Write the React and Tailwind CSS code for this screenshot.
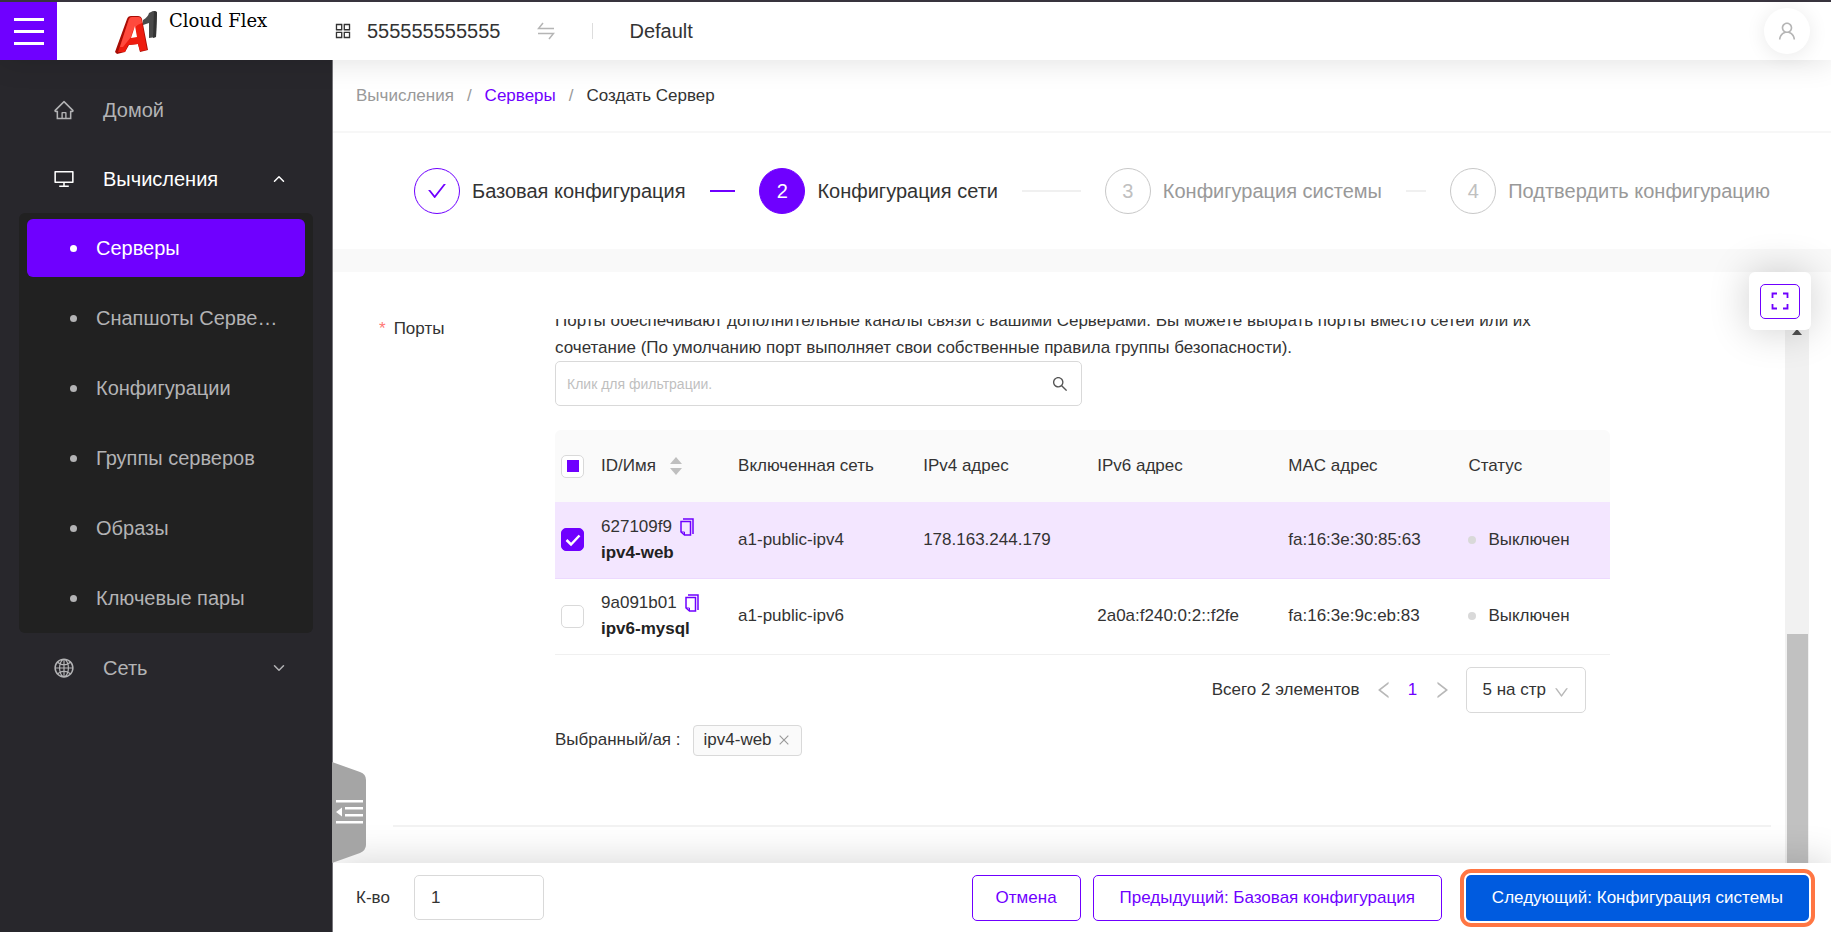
import React, { useEffect, useRef, useState } from 'react';
import {
  AiOutlineAppstore,
  AiOutlineCheck,
  AiOutlineClose,
  AiOutlineDesktop,
  AiOutlineDown,
  AiOutlineGlobal,
  AiOutlineHome,
  AiOutlineLeft,
  AiOutlineRight,
  AiOutlineSearch,
  AiOutlineUser,
} from 'react-icons/ai';
import { FiChevronDown, FiChevronUp } from 'react-icons/fi';

const computeItems = [
  'Серверы',
  'Снапшоты Серве…',
  'Конфигурации',
  'Группы серверов',
  'Образы',
  'Ключевые пары',
];

const steps = [
  { title: 'Базовая конфигурация', state: 'done' },
  { title: 'Конфигурация сети', state: 'active' },
  { title: 'Конфигурация системы', state: 'wait' },
  { title: 'Подтвердить конфигурацию', state: 'wait' },
];

const ports = [
  {
    id: '627109f9',
    name: 'ipv4-web',
    network: 'a1-public-ipv4',
    ipv4: '178.163.244.179',
    ipv6: '',
    mac: 'fa:16:3e:30:85:63',
    status: 'Выключен',
  },
  {
    id: '9a091b01',
    name: 'ipv6-mysql',
    network: 'a1-public-ipv6',
    ipv4: '',
    ipv6: '2a0a:f240:0:2::f2fe',
    mac: 'fa:16:3e:9c:eb:83',
    status: 'Выключен',
  },
];

function Logo() {
  return (
    <svg className="h-[44px] w-[46px]" viewBox="0 0 46 44" aria-hidden="true">
      <path d="M0 41 L12 8 Q13 5 16 5 L23 5 Q26 5 27 8 L33 39 L25 41 L23 33 L14 34 L10 41 L2 43 Z" fill="#a80d05" />
      <path d="M3 41 L14 8 Q15 6 17 6 L23 6 Q26 6 26.500 9 L32 39 L25 40 L23 33 L13 34 L10 41 Z" fill="#ee1c0f" />
      <path d="M14 8 Q15 6 17 6 L23 6 Q26 6 26.500 9 L27 12 Q18 14 16 26 L8 36 L5 36 Z" fill="#ff4a3d" />
      <path d="M16 27 L20 15 L22 26 Z" fill="#fff" />
      <path d="M28 9 Q33 6 34 2 L38 0 Q42 0 42 2 L41 26 L34 27 L34 12 L28 14 Z" fill="#4a4a4a" />
      <path d="M39 0 Q42 0 42 2 L41 26 L38 27 Z" fill="#333" />
    </svg>
  );
}

function SwapIcon() {
  return (
    <svg className="h-[18px] w-[18px]" viewBox="0 0 18 18" fill="none" stroke="#b5b5b5" strokeWidth="1.500" aria-hidden="true">
      <path d="M6 1 L1.500 6.500 H17" />
      <path d="M1 11.500 H16.500 L12 17" />
    </svg>
  );
}

function CopyIcon() {
  return (
    <svg className="h-[18px] w-[14px]" viewBox="0 0 14 18" fill="none" stroke="#6f00ff" strokeWidth="1.500" aria-hidden="true">
      <path d="M3 1 H13 V16" />
      <path d="M1 3.500 H10.500 V17 H4.500 L1 14 Z" />
      <path d="M1 14 H4.500 V17" strokeWidth="1" />
    </svg>
  );
}

function Header() {
  return (
    <header className="relative z-20 flex h-[60px] shrink-0 items-stretch border-t-2 border-[#38343e] bg-white shadow-[0_2px_30px_rgba(0,0,0,0.12)]">
      <button type="button" aria-label="Меню" className="flex w-[57px] flex-col items-center justify-center gap-[9px] bg-[#6f00ff]">
        <span className="h-[3px] w-[30px] bg-white" />
        <span className="h-[3px] w-[30px] bg-white" />
        <span className="h-[3px] w-[30px] bg-white" />
      </button>
      <a href="#home" className="ml-[58px] flex w-[218px] items-start gap-2 pt-[9px] text-black">
        <Logo />
        <span className="font-['DejaVu_Serif',serif] text-[18px] leading-[20px] whitespace-nowrap">Cloud Flex</span>
      </a>
      <div className="flex items-center text-[20px] text-[#333]">
        <AiOutlineAppstore className="size-5" />
        <span className="ml-[14px]">555555555555</span>
        <button type="button" aria-label="Сменить проект" className="ml-[37px]">
          <SwapIcon />
        </button>
        <span className="ml-[37px] h-4 w-px bg-[#ddd]" />
        <span className="ml-9">Default</span>
      </div>
      <button
        type="button"
        aria-label="Профиль"
        className="mr-[21px] ml-auto flex size-[46px] items-center justify-center self-center rounded-full bg-white text-[#b5b5b5] shadow-[0_2px_20px_rgba(0,0,0,0.09)]"
      >
        <AiOutlineUser className="size-[22px]" />
      </button>
    </header>
  );
}

function Sidebar() {
  return (
    <aside className="relative z-10 w-[333px] shrink-0 border-r border-[#77767b] bg-[#28272c] pt-[15px] text-[20px] text-[#b3b3b5]">
      <nav>
        <a href="#home" className="flex h-[69px] items-center pl-[53px]">
          <AiOutlineHome className="size-[22px]" />
          <span className="ml-7">Домой</span>
        </a>
        <button type="button" className="flex h-[69px] w-full items-center pr-[44px] pl-[53px] text-white">
          <AiOutlineDesktop className="size-[22px]" />
          <span className="ml-7">Вычисления</span>
          <FiChevronUp className="ml-auto size-[18px]" />
        </button>
        <ul className="mx-[19px] flex flex-col gap-3 rounded-md bg-[#212121] px-2 py-[6px]">
          {computeItems.map((item, i) => (
            <li key={item}>
              <a
                href="#compute"
                className={`flex h-[58px] items-center rounded-md pl-[43px] ${i === 0 ? 'bg-[#6f00ff] text-white' : ''}`}
              >
                <span className="size-[7px] rounded-full bg-current" />
                <span className="ml-[19px] whitespace-nowrap">{item}</span>
              </a>
            </li>
          ))}
        </ul>
        <button type="button" className="flex h-[69px] w-full items-center pr-[44px] pl-[53px]">
          <AiOutlineGlobal className="size-[22px]" />
          <span className="ml-7">Сеть</span>
          <FiChevronDown className="ml-auto size-[18px]" />
        </button>
      </nav>
      {/* collapse handle hanging over the content */}
      <button type="button" aria-label="Свернуть меню" className="absolute bottom-[69px] left-full">
        <svg className="h-[101px] w-[34px]" viewBox="0 0 34 101" aria-hidden="true">
          <path d="M0 0 L28 10 Q34 12 34 18 V83 Q34 88 28 91 L0 101 Z" fill="#a5a5a5" />
          <g fill="#fff">
            <rect x="4" y="38" width="27" height="2.500" />
            <rect x="13" y="45" width="18" height="2.500" />
            <rect x="13" y="52" width="18" height="2.500" />
            <rect x="4" y="59" width="27" height="2.500" />
            <path d="M4 50 L10 45.500 V54.500 Z" />
          </g>
        </svg>
      </button>
    </aside>
  );
}

function Steps() {
  const circle = {
    done: 'border-[#6f00ff] text-[#6f00ff]',
    active: 'border-[#6f00ff] bg-[#6f00ff] text-white',
    wait: 'border-[#c8c8c8] text-[#c0c0c0]',
  };
  return (
    <ol className="flex h-[116px] shrink-0 items-center pr-[61px] pl-[81px] text-[20px]">
      {steps.map((step, i) => {
        const last = i === steps.length - 1;
        return (
          <li key={step.title} className={`flex items-center ${last ? '' : 'flex-1'}`}>
            <span className={`flex size-[46px] shrink-0 items-center justify-center rounded-full border ${circle[step.state]}`}>
              {step.state === 'done' ? <AiOutlineCheck className="size-[22px]" /> : <span>{i + 1}</span>}
            </span>
            <span className={`ml-3 whitespace-nowrap ${step.state === 'wait' ? 'text-[#999]' : 'text-[#333]'}`}>
              {step.title}
            </span>
            {!last && (
              <span className={`mx-6 h-[2px] flex-1 ${step.state === 'done' ? 'bg-[#6f00ff]' : 'bg-[#f0f0f0]'}`} />
            )}
          </li>
        );
      })}
    </ol>
  );
}

function Checkbox({ checked, indeterminate, onChange, label }) {
  const ref = useRef(null);
  useEffect(() => {
    ref.current.indeterminate = !!indeterminate;
  }, [indeterminate]);

  return (
    <label className="relative flex size-[23px]">
      <input
        ref={ref}
        type="checkbox"
        aria-label={label}
        checked={checked}
        onChange={onChange}
        className="size-[23px] appearance-none rounded-[5px] border border-[#d9d9d9] bg-white checked:border-[#6f00ff] checked:bg-[#6f00ff]"
      />
      {indeterminate && <span className="pointer-events-none absolute inset-0 m-auto size-3 bg-[#6f00ff]" />}
      {checked && (
        <svg className="pointer-events-none absolute inset-0 m-auto size-4" viewBox="0 0 16 16" fill="none" stroke="#fff" strokeWidth="2.500">
          <path d="M1.500 8 L6 12.500 L14.500 3.500" />
        </svg>
      )}
    </label>
  );
}

function PortsTable({ selected, toggle, toggleAll }) {
  const all = selected.length === ports.length;
  return (
    <table className="mt-6 w-full table-fixed text-left">
      <colgroup>
        <col className="w-[37px]" />
        <col className="w-[137px]" />
        <col className="w-[185px]" />
        <col className="w-[174px]" />
        <col className="w-[191px]" />
        <col className="w-[180px]" />
        <col className="w-[150px]" />
      </colgroup>
      <thead>
        <tr className="h-[72px] bg-[#fafafa]">
          <th className="rounded-tl-md pl-[6px]">
            <Checkbox
              label="Выбрать все"
              checked={all}
              indeterminate={selected.length > 0 && !all}
              onChange={toggleAll}
            />
          </th>
          <th className="pl-[9px] font-normal">
            <button type="button" className="flex items-center gap-[14px]">
              ID/Имя
              <svg className="h-[18px] w-3" viewBox="0 0 12 18" fill="#bfbfbf" aria-hidden="true">
                <path d="M6 0 L12 7 H0 Z" />
                <path d="M6 18 L12 11 H0 Z" />
              </svg>
            </button>
          </th>
          <th className="pl-[9px] font-normal">Включенная сеть</th>
          <th className="pl-[9px] font-normal">IPv4 адрес</th>
          <th className="pl-[9px] font-normal">IPv6 адрес</th>
          <th className="pl-[9px] font-normal">MAC адрес</th>
          <th className="rounded-tr-md pl-[9px] font-normal">Статус</th>
        </tr>
      </thead>
      <tbody>
        {ports.map((port) => {
          const on = selected.includes(port.id);
          return (
            <tr key={port.id} className={`h-[76px] border-b ${on ? 'border-[#ecd9ff] bg-[#f3e6ff]' : 'border-[#f0f0f0]'}`}>
              <td className="pl-[6px]">
                <Checkbox label={port.name} checked={on} onChange={() => toggle(port.id)} />
              </td>
              <td className="pl-[9px] leading-[26px]">
                <div className="flex items-center gap-2">
                  {port.id}
                  <button type="button" aria-label="Копировать">
                    <CopyIcon />
                  </button>
                </div>
                <div className="font-bold text-[#222]">{port.name}</div>
              </td>
              <td className="pl-[9px]">{port.network}</td>
              <td className="pl-[9px]">{port.ipv4}</td>
              <td className="pl-[9px]">{port.ipv6}</td>
              <td className="pl-[9px]">{port.mac}</td>
              <td className="pl-[9px]">
                <span className="flex items-center gap-3">
                  <span className="size-2 rounded-full bg-[#d9d9d9]" />
                  {port.status}
                </span>
              </td>
            </tr>
          );
        })}
      </tbody>
    </table>
  );
}

function Pagination() {
  return (
    <div className="mt-3 flex items-center justify-end pr-6">
      <span>Всего 2 элементов</span>
      <button type="button" aria-label="Назад" className="ml-[13px] text-[#b8b8b8]">
        <AiOutlineLeft className="size-[22px]" />
      </button>
      <button type="button" className="w-9 text-center text-[#6f00ff]">1</button>
      <button type="button" aria-label="Вперед" className="text-[#b8b8b8]">
        <AiOutlineRight className="size-[22px]" />
      </button>
      <div className="relative ml-[13px]">
        <select
          aria-label="Элементов на странице"
          className="h-[46px] w-[120px] appearance-none rounded-[5px] border border-[#d9d9d9] bg-white pl-4"
        >
          <option>5 на стр</option>
          <option>10 на стр</option>
        </select>
        <AiOutlineDown className="pointer-events-none absolute top-[17px] right-4 size-[17px] text-[#b8b8b8]" />
      </div>
    </div>
  );
}

function PortsForm() {
  const [selected, setSelected] = useState(['627109f9']);
  const toggle = (id) =>
    setSelected((prev) => (prev.includes(id) ? prev.filter((x) => x !== id) : [...prev, id]));
  const toggleAll = () => setSelected((prev) => (prev.length === ports.length ? [] : ports.map((p) => p.id)));

  return (
    <section className="flex min-h-0 flex-1 pt-[47px] pr-[22px] pl-[46px]">
      <div className="min-w-0 flex-1 overflow-hidden">
        <div className="flex">
          <div className="w-[176px] shrink-0 leading-[20px]">
            <label htmlFor="ports-filter">
              <span className="mr-2 text-[#ff7875]">*</span>
              Порты
            </label>
          </div>
          <div className="-mt-3 w-3/4">
            <p className="leading-[27px]">
              Порты обеспечивают дополнительные каналы связи с вашими Серверами. Вы можете выбрать порты вместо сетей или их
              <br />
              сочетание (По умолчанию порт выполняет свои собственные правила группы безопасности).
            </p>
            <div className="flex h-[45px] w-1/2 items-center rounded-[5px] border border-[#d9d9d9] pr-3">
              <input
                id="ports-filter"
                type="text"
                placeholder="Клик для фильтрации."
                className="h-full min-w-0 flex-1 pl-[11px] text-[14px] outline-none placeholder:text-[#bfbfbf]"
              />
              <AiOutlineSearch className="size-[18px] text-[#555]" />
            </div>
            <PortsTable selected={selected} toggle={toggle} toggleAll={toggleAll} />
            <Pagination />
            <div className="mt-3 flex items-center">
              Выбранный/ая :
              {ports
                .filter((p) => selected.includes(p.id))
                .map((p) => (
                  <span key={p.id} className="ml-3 flex h-[31px] items-center rounded-[4px] border border-[#d9d9d9] bg-[#fafafa] px-[10px]">
                    {p.name}
                    <button type="button" aria-label="Убрать" className="ml-[5px] text-[#999]" onClick={() => toggle(p.id)}>
                      <AiOutlineClose className="size-[14px]" />
                    </button>
                  </span>
                ))}
            </div>
          </div>
        </div>
        <hr className="mx-[14px] mt-[69px] border-t-2 border-[#f3f3f3]" />
      </div>
      {/* scrollbar */}
      <div className="flex w-6 shrink-0 flex-col items-center bg-[#f1f1f1] pt-[10px]">
        <svg className="h-[6px] w-[10px]" viewBox="0 0 10 6" fill="#505050" aria-hidden="true">
          <path d="M5 0 L10 6 H0 Z" />
        </svg>
        <div className="mt-auto h-[229px] w-[21px] bg-[#c1c1c1]" />
      </div>
    </section>
  );
}

function FullscreenBox() {
  return (
    <div className="absolute top-[212px] right-5 z-10 flex h-[58px] w-[62px] items-center justify-center rounded-md bg-white shadow-[0_0_40px_rgba(0,0,0,0.2)]">
      <button type="button" aria-label="На весь экран" className="flex h-[35px] w-10 items-center justify-center rounded-[5px] border border-[#6f00ff]">
        <svg className="size-[18px]" viewBox="0 0 18 18" fill="none" stroke="#6f00ff" strokeWidth="1.800" aria-hidden="true">
          <path d="M1.500 6 V1.500 H6 M12 1.500 H16.500 V6 M16.500 12 V16.500 H12 M6 16.500 H1.500 V12" />
        </svg>
      </button>
    </div>
  );
}

function Footer() {
  return (
    <footer className="relative z-20 flex h-[69px] shrink-0 items-center bg-white pr-[22px] pl-[23px] shadow-[0_-4px_36px_rgba(0,0,0,0.15)]">
      <label htmlFor="count" className="w-[58px]">К-во</label>
      <input
        id="count"
        type="text"
        defaultValue="1"
        className="h-[45px] w-[130px] rounded-[5px] border border-[#d9d9d9] px-4"
      />
      <button type="button" className="ml-auto h-[46px] rounded-[5px] border border-[#6f00ff] px-[23px] text-[#6f00ff]">
        Отмена
      </button>
      <button type="button" className="ml-3 h-[46px] rounded-[5px] border border-[#6f00ff] px-[26px] text-[#6f00ff]">
        Предыдущий: Базовая конфигурация
      </button>
      <button
        type="button"
        className="ml-6 h-[46px] rounded-[5px] bg-[#005bdf] px-[26px] text-white outline-4 outline-offset-2 outline-[#ff7643]"
      >
        Следующий: Конфигурация системы
      </button>
    </footer>
  );
}

function App() {
  return (
    <div className="flex h-screen flex-col overflow-hidden bg-white font-['Liberation_Sans',Arial,sans-serif] text-[17px] text-[#333]">
      <Header />
      <div className="flex min-h-0 flex-1">
        <Sidebar />
        <main className="relative isolate flex min-w-0 flex-1 flex-col">
          <nav className="flex h-[73px] shrink-0 items-center gap-[13px] border-b-2 border-[#f7f7f7] pl-[23px]">
            <span className="text-[#999]">Вычисления</span>
            <span className="text-[#999]">/</span>
            <a href="#servers" className="text-[#6f00ff]">Серверы</a>
            <span className="text-[#999]">/</span>
            <span>Создать Сервер</span>
          </nav>
          <Steps />
          <div className="h-[23px] shrink-0 bg-[#f9f9f9]" />
          <PortsForm />
          <FullscreenBox />
          <Footer />
        </main>
      </div>
    </div>
  );
}

export default App;
